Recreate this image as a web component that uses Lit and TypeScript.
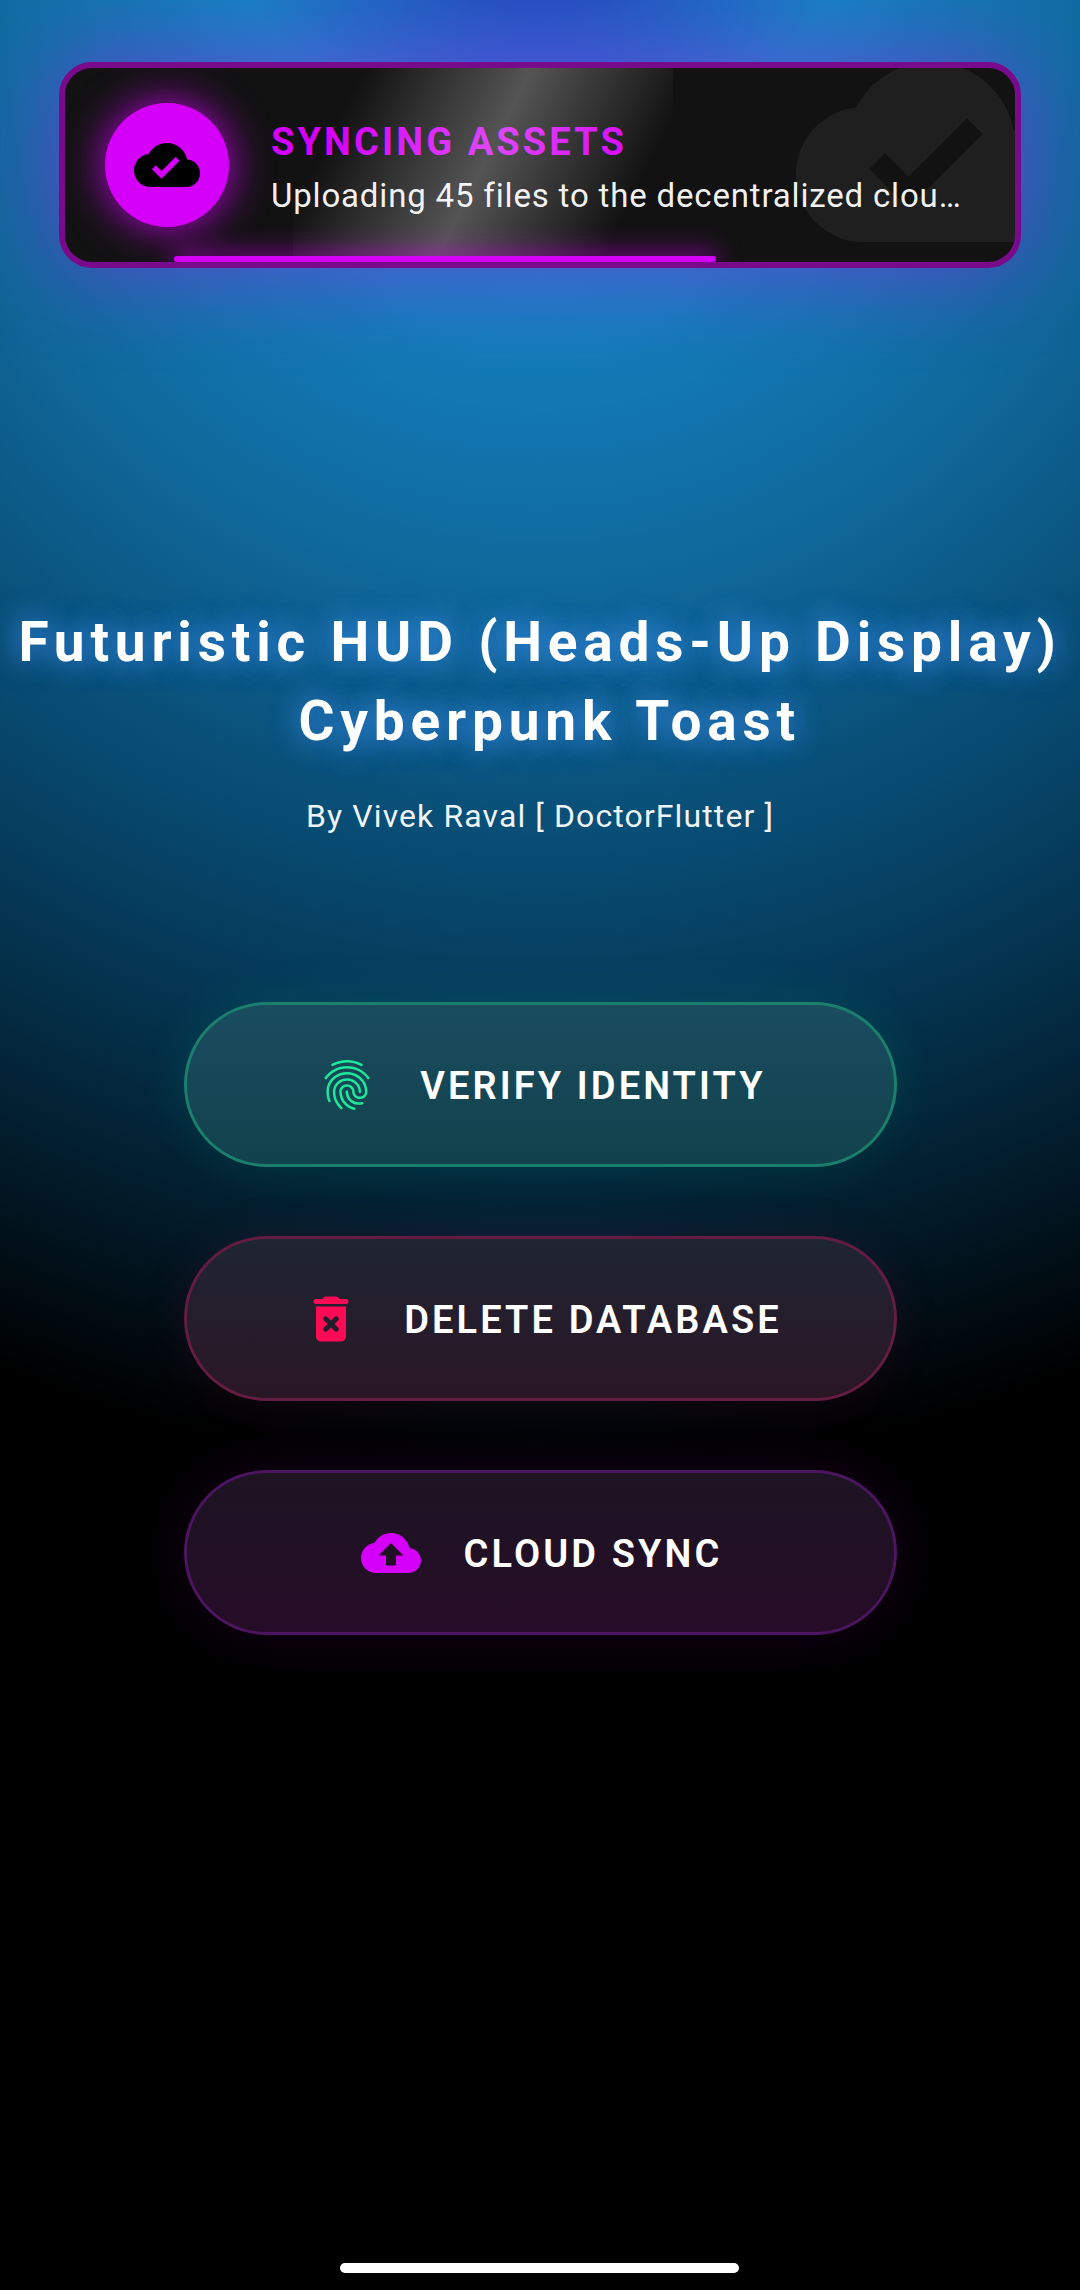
import { LitElement, html, css, svg } from "lit";
import { customElement } from "lit/decorators.js";

const CLOUD_DONE = "M19.35 10.04C18.67 6.59 15.64 4 12 4 9.11 4 6.6 5.64 5.35 8.04 2.34 8.36 0 10.91 0 14c0 3.31 2.69 6 6 6h13c2.76 0 5-2.24 5-5 0-2.64-2.05-4.78-4.65-4.96zM10 17l-3.5-3.5 1.41-1.41L10 14.17 15.18 9l1.41 1.41L10 17z";
const CLOUD_UP = "M19.35 10.04C18.67 6.59 15.64 4 12 4 9.11 4 6.6 5.64 5.35 8.04 2.34 8.36 0 10.91 0 14c0 3.31 2.69 6 6 6h13c2.76 0 5-2.24 5-5 0-2.64-2.05-4.78-4.65-4.96zM14 13v4h-4v-4H7l5-5 5 5h-3z";
const FINGER = "M17.81 4.47c-.08 0-.16-.02-.23-.06C15.66 3.42 14 3 12.01 3c-1.98 0-3.86.47-5.57 1.41-.24.13-.54.04-.68-.2-.13-.24-.04-.55.2-.68C7.82 2.52 9.86 2 12.01 2c2.13 0 3.99.47 6.03 1.52.25.13.34.43.21.67-.09.18-.26.28-.44.28zM3.5 9.72c-.1 0-.2-.03-.29-.09-.23-.16-.28-.47-.12-.7.99-1.4 2.25-2.5 3.75-3.27C9.98 4.04 14 4.03 17.15 5.65c1.5.77 2.76 1.86 3.75 3.25.16.22.11.54-.12.7-.23.16-.54.11-.7-.12-.9-1.26-2.04-2.25-3.39-2.94-2.87-1.47-6.54-1.47-9.4.01-1.36.7-2.5 1.7-3.4 2.96-.08.14-.23.21-.39.21zm6.25 12.07c-.13 0-.26-.05-.35-.15-.87-.87-1.34-1.43-2.01-2.64-.69-1.23-1.05-2.73-1.05-4.34 0-2.97 2.54-5.39 5.66-5.39s5.66 2.42 5.66 5.39c0 .28-.22.5-.5.5s-.5-.22-.5-.5c0-2.42-2.09-4.39-4.66-4.39-2.57 0-4.66 1.97-4.66 4.39 0 1.44.32 2.77.93 3.85.64 1.15 1.08 1.64 1.85 2.42.19.2.19.51 0 .71-.11.1-.24.15-.37.15zm7.17-1.85c-1.19 0-2.24-.3-3.1-.89-1.49-1.01-2.38-2.65-2.38-4.39 0-.28.22-.5.5-.5s.5.22.5.5c0 1.41.72 2.74 1.94 3.56.71.48 1.54.71 2.54.71.24 0 .64-.03 1.04-.1.27-.05.53.13.58.41.05.27-.13.53-.41.58-.57.11-1.07.12-1.21.12zM14.91 22c-.04 0-.09-.01-.13-.02-1.59-.44-2.63-1.03-3.72-2.1-1.4-1.39-2.17-3.24-2.17-5.22 0-1.62 1.38-2.94 3.08-2.94 1.7 0 3.08 1.32 3.08 2.94 0 1.07.93 1.94 2.08 1.94s2.08-.87 2.08-1.94c0-3.77-3.25-6.83-7.25-6.83-2.84 0-5.44 1.58-6.61 4.03-.39.81-.59 1.76-.59 2.8 0 .78.07 2.01.67 3.61.1.26-.03.55-.29.64-.26.1-.55-.04-.64-.29-.49-1.31-.73-2.61-.73-3.96 0-1.2.23-2.29.68-3.24 1.33-2.79 4.28-4.6 7.51-4.6 4.55 0 8.25 3.51 8.25 7.83 0 1.62-1.38 2.94-3.08 2.94s-3.08-1.32-3.08-2.94c0-1.07-.93-1.94-2.08-1.94s-2.08.87-2.08 1.94c0 1.71.66 3.31 1.87 4.51.95.94 1.86 1.46 3.27 1.85.27.07.42.35.35.61-.05.23-.26.38-.47.38z";
const TRASH = "M6 19c0 1.1.9 2 2 2h8c1.1 0 2-.9 2-2V7H6v12zm3.17-7.83c.39-.39 1.02-.39 1.41 0L12 12.59l1.42-1.42c.39-.39 1.02-.39 1.41 0 .39.39.39 1.02 0 1.41L13.41 14l1.42 1.42c.39.39.39 1.02 0 1.41-.39.39-1.02.39-1.41 0L12 15.41l-1.42 1.42c-.39.39-1.02.39-1.41 0-.39-.39-.39-1.02 0-1.41L10.59 14l-1.42-1.42c-.4-.39-.4-1.02 0-1.41zM15.5 4l-.71-.71c-.18-.18-.44-.29-.7-.29H9.91c-.26 0-.52.11-.7.29L8.5 4H6c-.55 0-1 .45-1 1s.45 1 1 1h12c.55 0 1-.45 1-1s-.45-1-1-1h-2.5z";

const icon = (d: string, cls: string) =>
  html`<svg class=${cls} viewBox="0 0 24 24">${svg`<path d=${d}></path>`}</svg>`;

@customElement("app-root")
export class AppRoot extends LitElement {
  static styles = css`
    :host {
      display: block;
      width: 1080px;
      height: 2290px;
      overflow: hidden;
      position: relative;
      font-family: Roboto, "Liberation Sans", sans-serif;
      color: #fff;
      background:
        radial-gradient(ellipse 300px 180px at 540px -50px, rgba(40, 40, 180, 0.8), rgba(40, 40, 180, 0) 100%),
        radial-gradient(ellipse 1500px 1500px at 540px 0px, #1b8ad0 0%, #1480c0 20%, #0f6799 40%, #07476c 60%, #04304a 73%, #021a28 85%, #000 98%);
    }
    .page {
      display: flex;
      flex-direction: column;
      align-items: center;
      padding-top: 62px;
    }
    .toast {
      box-sizing: border-box;
      width: 962px;
      height: 206px;
      border: 6px solid #7a0a8c;
      border-radius: 33px;
      background: #121212;
      box-shadow: 0 0 90px 6px rgba(213, 0, 249, 0.36);
      position: relative;
      overflow: hidden;
      display: flex;
      align-items: center;
      padding-left: 40px;
      gap: 42px;
    }
    .watermark {
      position: absolute;
      left: 731px;
      top: -51px;
      width: 270px;
      height: 270px;
      fill: rgba(255, 255, 255, 0.06);
    }
    .shimmer {
      position: absolute;
      left: 228px;
      top: 0;
      width: 380px;
      height: 100%;
      background: linear-gradient(116.6deg, rgba(255, 255, 255, 0) 15%, rgba(255, 255, 255, 0.28) 50%, rgba(255, 255, 255, 0) 85%);
    }
    .orb {
      flex: none;
      width: 124px;
      height: 124px;
      border-radius: 50%;
      background: #d500f9;
      box-shadow: 0 0 42px 2px rgba(213, 0, 249, 0.8);
      display: flex;
      align-items: center;
      justify-content: center;
      position: relative;
    }
    .orb svg {
      width: 66px;
      height: 66px;
      fill: #000;
    }
    .copy {
      position: relative;
      min-width: 0;
      display: flex;
      flex-direction: column;
      gap: 13px;
      margin-top: 6px;
    }
    .copy .t {
      font-size: 38px;
      line-height: 42px;
      font-weight: 700;
      letter-spacing: 3.1px;
      color: #d500f9;
    }
    .copy .b {
      font-size: 33px;
      line-height: 40px;
      letter-spacing: 0.83px;
      color: rgba(255, 255, 255, 0.95);
      white-space: nowrap;
    }
    .progress {
      position: absolute;
      left: 109px;
      bottom: 0;
      width: 542px;
      height: 6px;
      border-radius: 3px;
      background: #d500f9;
      box-shadow: 0 0 24px 2px rgba(213, 0, 249, 0.85);
    }
    h1 {
      margin: 335px 0 0;
      text-align: center;
      font-size: 55px;
      line-height: 79px;
      font-weight: 700;
      letter-spacing: 5.8px;
      white-space: pre;
      text-shadow: 0 0 30px rgba(70, 150, 255, 0.8), 0 0 30px rgba(70, 150, 255, 0.4);
    }
    .by {
      margin-top: 35px;
      font-size: 32px;
      line-height: 40px;
      letter-spacing: 1.1px;
      color: rgba(255, 255, 255, 0.95);
    }
    .buttons {
      margin-top: 166px;
      display: flex;
      flex-direction: column;
      gap: 69px;
    }
    .btn {
      box-sizing: border-box;
      width: 713px;
      height: 165px;
      border-radius: 83px;
      border: 3px solid;
      display: flex;
      align-items: center;
      justify-content: center;
      gap: 43px;
      padding-left: 3px;
      font-size: 38px;
      font-weight: 600;
      letter-spacing: 3.1px;
    }
    .btn span {
      margin-top: 2px;
    }
    .btn svg {
      width: 60px;
      height: 60px;
      flex: none;
    }
    .green {
      border-color: #1a7f6c;
      background: linear-gradient(#1a4c60, #12424c);
      box-shadow: 0 0 50px rgba(0, 230, 150, 0.11);
    }
    .green svg { fill: #1de99b; }
    .pink {
      border-color: #641c42;
      background: linear-gradient(#1f2533, #2a1625);
      box-shadow: 0 0 50px rgba(255, 10, 84, 0.09);
    }
    .pink svg { fill: #ff0a54; }
    .purple {
      border-color: #4c1560;
      background: linear-gradient(#1d1422, #260c28);
      box-shadow: 0 0 50px rgba(213, 0, 249, 0.11);
    }
    .purple svg { fill: #d500f9; }
    .home {
      position: absolute;
      left: 340px;
      bottom: 17px;
      width: 399px;
      height: 10px;
      border-radius: 5px;
      background: #fff;
    }
  `;

  render() {
    return html`
      <div class="page">
        <div class="toast">
          ${icon(CLOUD_DONE, "watermark")}
          <div class="orb">${icon(CLOUD_DONE, "")}</div>
          <div class="copy">
            <div class="t">SYNCING ASSETS</div>
            <div class="b">Uploading 45 files to the decentralized clou…</div>
          </div>
          <div class="shimmer"></div>
          <div class="progress"></div>
        </div>
        <h1>${"Futuristic HUD (Heads-Up Display)\n Cyberpunk Toast"}</h1>
        <div class="by">By Vivek Raval [ DoctorFlutter ]</div>
        <div class="buttons">
          <div class="btn green">${icon(FINGER, "")}<span>VERIFY IDENTITY</span></div>
          <div class="btn pink">${icon(TRASH, "")}<span>DELETE DATABASE</span></div>
          <div class="btn purple">${icon(CLOUD_UP, "")}<span>CLOUD SYNC</span></div>
        </div>
      </div>
      <div class="home"></div>
    `;
  }
}
